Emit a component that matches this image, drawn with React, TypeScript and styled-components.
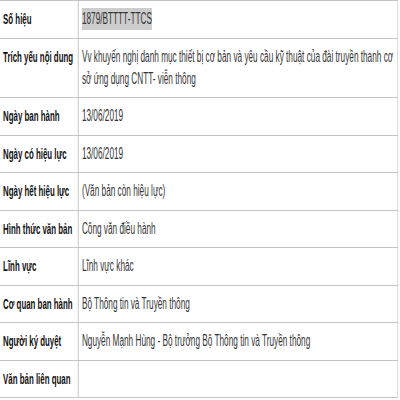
import React from "react";
import styled, { createGlobalStyle } from "styled-components";

const SCALE_X = 0.515;

const Global = createGlobalStyle`
  html, body {
    margin: 0;
    padding: 0;
    background: #ffffff;
    overflow: hidden;
  }
  body {
    font-family: "Liberation Sans", Arial, sans-serif;
  }
`;

const Viewport = styled.div`
  width: 400px;
  height: 400px;
  overflow: hidden;
`;

const Squeeze = styled.div`
  width: ${400 / SCALE_X}px;
  transform: scaleX(${SCALE_X});
  transform-origin: 0 0;
`;

const Table = styled.div`
  display: grid;
  grid-template-columns: 153px 1fr;
  width: 773px;
  border-top: 1px solid #c4c4c4;
  font-size: 16px;
  line-height: 22px;
`;

const Cell = styled.div`
  padding: 7.25px 0 7.25px 6px;
  border-bottom: 1px solid #c4c4c4;
`;

const Label = styled(Cell)`
  font-weight: bold;
  font-size: 15.3px;
  color: #111111;
  border-right: 2px solid #c8c8c8;
  white-space: nowrap;
`;

const Value = styled(Cell)`
  color: #363636;
  border-right: 2px solid #dadada;
`;

const Mark = styled.span`
  display: inline-block;
  background: #cdcdcd;
  line-height: 22px;
`;

const rows: { label: string; value: React.ReactNode }[] = [
  { label: "Số hiệu", value: <Mark>1879/BTTTT-TTCS</Mark> },
  {
    label: "Trích yếu nội dung",
    value:
      "Vv khuyến nghị danh mục thiết bị cơ bản và yêu cầu kỹ thuật của đài truyền thanh cơ sở ứng dụng CNTT- viễn thông",
  },
  { label: "Ngày ban hành", value: "13/06/2019" },
  { label: "Ngày có hiệu lực", value: "13/06/2019" },
  { label: "Ngày hết hiệu lực", value: "(Văn bản còn hiệu lực)" },
  { label: "Hình thức văn bản", value: "Công văn điều hành" },
  { label: "Lĩnh vực", value: "Lĩnh vực khác" },
  { label: "Cơ quan ban hành", value: "Bộ Thông tin và Truyền thông" },
  {
    label: "Người ký duyệt",
    value: "Nguyễn Mạnh Hùng - Bộ trưởng Bộ Thông tin và Truyền thông",
  },
  { label: "Văn bản liên quan", value: "" },
];

export default function App() {
  return (
    <Viewport>
      <Global />
      <Squeeze>
        <Table>
          {rows.map((r) => (
            <React.Fragment key={r.label}>
              <Label>{r.label}</Label>
              <Value>{r.value || "\u00a0"}</Value>
            </React.Fragment>
          ))}
        </Table>
      </Squeeze>
    </Viewport>
  );
}
